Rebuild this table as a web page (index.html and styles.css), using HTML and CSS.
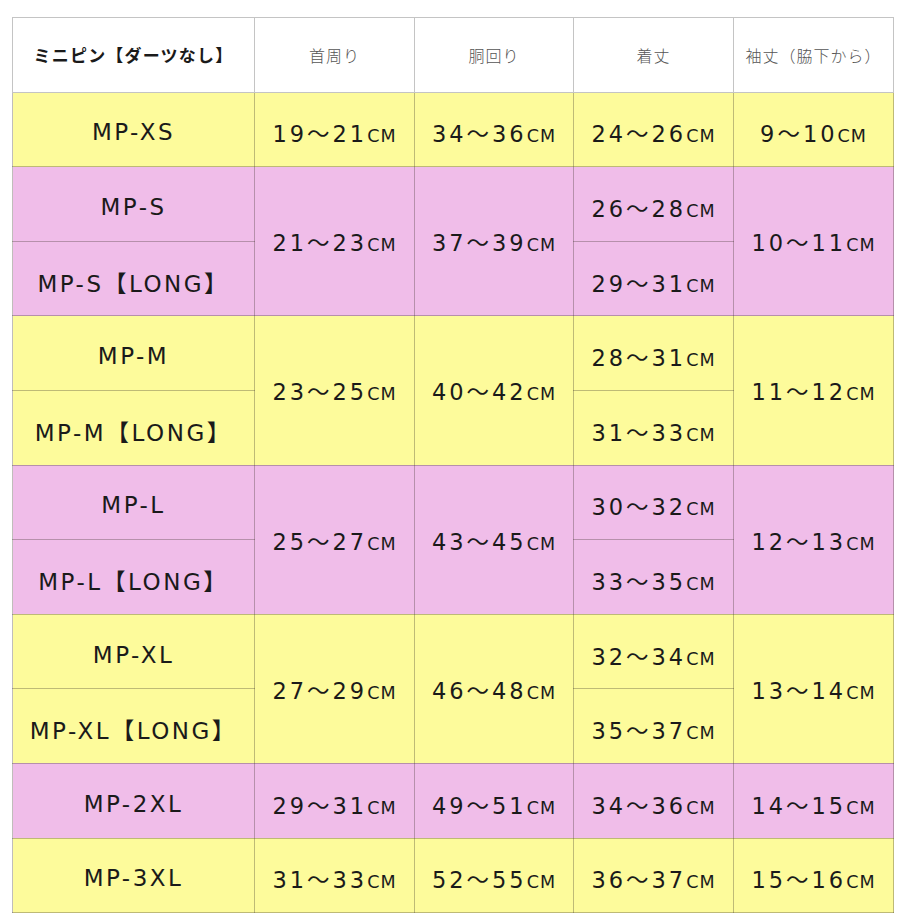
FILE: index.html
```html
<!DOCTYPE html>
<html lang="ja">
<head>
<meta charset="utf-8">
<title>ミニピン サイズ表</title>
<link rel="stylesheet" href="styles.css">
</head>
<body>
<div class="page">
<table class="size">
  <colgroup>
    <col class="c1"><col class="c2"><col class="c3"><col class="c4"><col class="c5">
  </colgroup>
  <thead>
    <tr class="head">
      <th class="title">ミニピン【ダーツなし】</th>
      <th>首周り</th>
      <th>胴回り</th>
      <th>着丈</th>
      <th>袖丈（脇下から）</th>
    </tr>
  </thead>
  <tbody>
    <tr class="y">
      <td class="name">MP-XS</td><td>19～21<span class="u">cm</span></td><td>34～36<span class="u">cm</span></td><td>24～26<span class="u">cm</span></td><td>9～10<span class="u">cm</span></td>
    </tr>
    <tr class="p">
      <td class="name">MP-S</td><td rowspan="2" class="span">21～23<span class="u">cm</span></td><td rowspan="2" class="span">37～39<span class="u">cm</span></td><td>26～28<span class="u">cm</span></td><td rowspan="2" class="span">10～11<span class="u">cm</span></td>
    </tr>
    <tr class="p">
      <td class="name">MP-S【LONG】</td><td>29～31<span class="u">cm</span></td>
    </tr>
    <tr class="y">
      <td class="name">MP-M</td><td rowspan="2" class="span">23～25<span class="u">cm</span></td><td rowspan="2" class="span">40～42<span class="u">cm</span></td><td>28～31<span class="u">cm</span></td><td rowspan="2" class="span">11～12<span class="u">cm</span></td>
    </tr>
    <tr class="y">
      <td class="name">MP-M【LONG】</td><td>31～33<span class="u">cm</span></td>
    </tr>
    <tr class="p">
      <td class="name">MP-L</td><td rowspan="2" class="span">25～27<span class="u">cm</span></td><td rowspan="2" class="span">43～45<span class="u">cm</span></td><td>30～32<span class="u">cm</span></td><td rowspan="2" class="span">12～13<span class="u">cm</span></td>
    </tr>
    <tr class="p">
      <td class="name">MP-L【LONG】</td><td>33～35<span class="u">cm</span></td>
    </tr>
    <tr class="y">
      <td class="name">MP-XL</td><td rowspan="2" class="span">27～29<span class="u">cm</span></td><td rowspan="2" class="span">46～48<span class="u">cm</span></td><td>32～34<span class="u">cm</span></td><td rowspan="2" class="span">13～14<span class="u">cm</span></td>
    </tr>
    <tr class="y">
      <td class="name">MP-XL【LONG】</td><td>35～37<span class="u">cm</span></td>
    </tr>
    <tr class="p">
      <td class="name">MP-2XL</td><td>29～31<span class="u">cm</span></td><td>49～51<span class="u">cm</span></td><td>34～36<span class="u">cm</span></td><td>14～15<span class="u">cm</span></td>
    </tr>
    <tr class="y">
      <td class="name">MP-3XL</td><td>31～33<span class="u">cm</span></td><td>52～55<span class="u">cm</span></td><td>36～37<span class="u">cm</span></td><td>15～16<span class="u">cm</span></td>
    </tr>
  </tbody>
</table>
</div>
</body>
</html>
```
FILE: styles.css
```css
html, body {
  margin: 0;
  padding: 0;
  background: #ffffff;
}
.page {
  padding: 17px 0 0 12px;
}
.size {
  border-collapse: collapse;
  table-layout: fixed;
  width: 881px;
  border: 1px solid #9a9a9a;
  font-family: "DejaVu Sans", "Noto Sans CJK JP", sans-serif;
  color: #1a1a1a;
}
.c1 { width: 242px; }
.c2 { width: 160px; }
.c3 { width: 159px; }
.c4 { width: 160px; }
.c5 { width: 160px; }
.size th, .size td {
  border: 1px solid rgba(60, 50, 40, 0.32);
  text-align: center;
  vertical-align: middle;
  padding: 0;
}
.head th {
  height: 73.6px;
  background: #ffffff;
  font-family: "Noto Sans CJK JP", sans-serif;
  font-weight: 300;
  font-size: 16px;
  letter-spacing: 1px;
  color: #555555;
  border-color: #c4c4c4;
}
.head th.title {
  font-weight: 700;
  color: #1a1a1a;
  font-size: 17px;
  letter-spacing: 1.2px;
}
.size td {
  height: 67.6px;
  font-size: 22.5px;
  letter-spacing: 3px;
  white-space: nowrap;
  padding-top: 6px;
}
.size td.span {
  padding-top: 0;
}
.size td.name {
  font-size: 23px;
  letter-spacing: 2.5px;
}
.u {
  text-transform: uppercase;
  font-size: 0.78em;
  letter-spacing: 1px;
}
.y td { background: #fdfb9b; }
.p td { background: #f0bde9; }
```
